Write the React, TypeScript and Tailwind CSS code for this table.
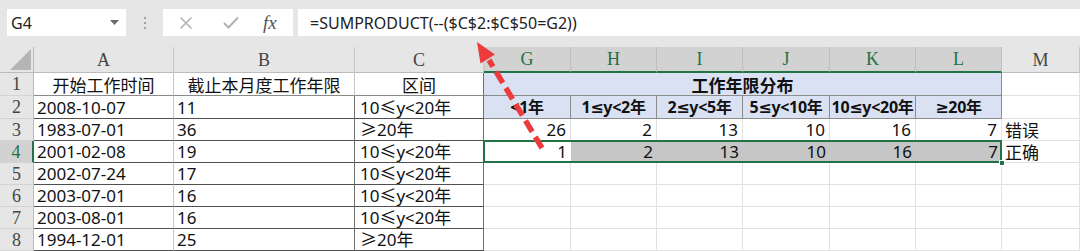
import React from "react";

const SANS = "font-['Noto_Sans','Noto_Sans_CJK_SC',sans-serif]";
const HSANS = "font-['Noto_Sans','DejaVu_Sans','Noto_Sans_CJK_SC',sans-serif]";
const CJK = "font-['Noto_Sans_CJK_SC','Noto_Sans',sans-serif]";
const SERIF = "font-['Liberation_Serif',serif]";

const colHeaders = [
  { l: "A", sel: false },
  { l: "B", sel: false },
  { l: "C", sel: false },
  { l: "G", sel: true },
  { l: "H", sel: true },
  { l: "I", sel: true },
  { l: "J", sel: true },
  { l: "K", sel: true },
  { l: "L", sel: true },
  { l: "M", sel: false },
];

const dataRows: [string, string, string][] = [
  ["2008-10-07", "11", "10≤y<20年"],
  ["1983-07-01", "36", "≥20年"],
  ["2001-02-08", "19", "10≤y<20年"],
  ["2002-07-24", "17", "10≤y<20年"],
  ["2003-07-01", "16", "10≤y<20年"],
  ["2003-08-01", "16", "10≤y<20年"],
  ["1994-12-01", "25", "≥20年"],
];

const ranges = ["<1年", "1≤y<2年", "2≤y<5年", "5≤y<10年", "10≤y<20年", "≥20年"];
const wrong = ["26", "2", "13", "10", "16", "7"];
const right = ["1", "2", "13", "10", "16", "7"];

function RowHead({ n, sel }: { n: number; sel?: boolean }) {
  return (
    <div
      className={`${SERIF} text-[18px] leading-none flex items-center justify-center border-b border-[#d4d4d4] ${
        sel
          ? "bg-[#d2d2d2] text-[#217346] border-r-2 border-r-[#217346]"
          : "bg-[#e6e6e6] text-[#444] border-r border-r-[#bcbcbc]"
      }`}
    >
      {n}
    </div>
  );
}

export default function App() {
  return (
    <div className="relative w-[1080px] h-[251px] overflow-hidden bg-white leading-none">
      {/* formula bar */}
      <div className="h-[47px] bg-[#e6e6e6] flex items-start pt-[9px]">
        <div className={`ml-[7px] w-[119px] h-[27px] bg-white flex items-center justify-between pl-[4px] pr-[7px] ${SANS} text-[16px] text-[#222]`}>
          <span>G4</span>
          <svg width="9" height="5" viewBox="0 0 9 5">
            <path d="M0 0 H9 L4.5 5 Z" fill="#6b6b6b" />
          </svg>
        </div>
        <div className="w-[37px] h-[27px] flex flex-col items-center justify-center gap-[3px]">
          <div className="w-[2px] h-[2px] bg-[#a0a0a0]" />
          <div className="w-[2px] h-[2px] bg-[#a0a0a0]" />
          <div className="w-[2px] h-[2px] bg-[#a0a0a0]" />
        </div>
        <div className="w-[130px] h-[27px] bg-white flex items-center">
          <svg width="14" height="14" viewBox="0 0 14 14" className="ml-[16px]">
            <path d="M1.5 1.5 L12.5 12.5 M12.5 1.5 L1.5 12.5" stroke="#b3b3b3" strokeWidth="1.6" />
          </svg>
          <svg width="16" height="13" viewBox="0 0 16 13" className="ml-[30px]">
            <path d="M1 7 L5.5 11.5 L15 1.5" stroke="#b3b3b3" strokeWidth="2" fill="none" />
          </svg>
          <span className={`ml-[24px] ${SERIF} italic text-[19px] text-[#555] leading-none`}>fx</span>
        </div>
        <div className={`ml-[5px] flex-1 h-[27px] bg-white flex items-center pl-[12px] ${SANS} text-[16px] text-[#222]`}>
          =SUMPRODUCT(--($C$2:$C$50=G2))
        </div>
      </div>

      {/* sheet grid */}
      <div className="grid grid-cols-[34px_140px_181px_129px_87px_86px_86px_87px_86px_86px_78px] grid-rows-[26px_23px_23px_22px_22px_22px_22px_22px_22px]">
        {/* header row */}
        <div className="bg-[#e6e6e6] border-r border-b border-[#bcbcbc] flex items-end justify-end pr-[2px] pb-[2px]">
          <svg width="21" height="21" viewBox="0 0 21 21">
            <path d="M21 0 V21 H0 Z" fill="#b5b5b5" />
          </svg>
        </div>
        {colHeaders.map((c) => (
          <div
            key={c.l}
            className={`${SERIF} text-[18px] flex items-center justify-center border-r ${
              c.sel
                ? "bg-[#d2d2d2] text-[#217346] border-r-[#bdbdbd] border-b-2 border-b-[#217346]"
                : "bg-[#e6e6e6] text-[#444] border-r-[#c8c8c8] border-b border-b-[#bcbcbc]"
            } ${c.l === "C" ? "border-r-[#9a9a9a]" : ""}`}
          >
            {c.l}
          </div>
        ))}

        {/* row 1 */}
        <RowHead n={1} />
        <div className={`${CJK} text-[17px] text-[#111] flex items-center justify-center border-r border-b border-r-[#c4c4c4] border-b-[#8a8a8a]`}>开始工作时间</div>
        <div className={`${CJK} text-[17px] text-[#111] flex items-center justify-center border-r border-b border-r-[#c4c4c4] border-b-[#8a8a8a]`}>截止本月度工作年限</div>
        <div className={`${CJK} text-[17px] text-[#111] flex items-center justify-center border-r border-b border-r-[#6e6e6e] border-b-[#8a8a8a]`}>区间</div>
        <div className={`col-span-6 bg-[#d9e1f2] ${CJK} font-bold text-[17px] text-[#111] flex items-center justify-center border-r border-b border-[#8c8c8c]`}>
          工作年限分布
        </div>
        <div className="border-r border-b border-[#e1e1e1]" />

        {/* rows 2-8 */}
        {dataRows.map((r, i) => {
          const rowNum = i + 2;
          const isSel = rowNum === 4;
          const darkBottom = "border-b-[#505050]";
          return (
            <React.Fragment key={rowNum}>
              <RowHead n={rowNum} sel={isSel} />
              <div className={`${SANS} text-[17px] text-[#111] flex items-center pl-[3px] border-r border-b border-r-[#c4c4c4] ${darkBottom}`}>
                {r[0]}
              </div>
              <div className={`${SANS} text-[17px] text-[#111] flex items-center pl-[3px] border-r border-b border-r-[#6e6e6e] ${darkBottom}`}>
                {r[1]}
              </div>
              <div className={`${SANS} text-[17px] text-[#111] flex items-center pl-[5px] border-r border-b border-r-[#6e6e6e] whitespace-nowrap ${darkBottom}`}>
                {r[2]}
              </div>
              {rowNum === 2 &&
                ranges.map((t) => (
                  <div
                    key={t}
                    className={`bg-[#d9e1f2] ${HSANS} font-bold text-[16px] text-[#111] flex items-center justify-center border-r border-b border-[#8c8c8c] whitespace-nowrap tracking-[-0.3px] overflow-hidden`}
                  >
                    {t}
                  </div>
                ))}
              {rowNum === 3 &&
                wrong.map((t, k) => (
                  <div key={k} className={`${SANS} text-[17px] text-[#111] flex items-center justify-end pr-[4px] border-r border-b border-[#e1e1e1]`}>
                    {t}
                  </div>
                ))}
              {rowNum === 4 && (
                <div className="relative col-span-6 flex h-[22px]">
                  {right.map((t, k) => (
                    <div
                      key={k}
                      className={`${SANS} text-[17px] text-[#111] h-full flex items-center justify-end pr-[4px] border-b ${
                        k === 0 ? "w-[87px] bg-white border-[#e1e1e1]" : k === 3 ? "w-[87px] bg-[#c6c6c6] border-[#c6c6c6]" : "w-[86px] bg-[#c6c6c6] border-[#c6c6c6]"
                      }`}
                    >
                      {t}
                    </div>
                  ))}
                  <div className="absolute -left-px -top-px right-0 bottom-0 border-2 border-[#217346]" />
                  <div className="absolute -right-[3px] -bottom-[3px] w-[6px] h-[6px] bg-[#217346] border border-white" />
                </div>
              )}
              {rowNum > 4 &&
                wrong.map((_, k) => <div key={k} className="border-r border-b border-[#e1e1e1]" />)}
              <div className={`${CJK} text-[17px] text-[#111] flex items-center pl-[3px] border-r border-b border-[#e1e1e1]`}>
                {rowNum === 3 ? "错误" : rowNum === 4 ? "正确" : ""}
              </div>
            </React.Fragment>
          );
        })}
      </div>

      {/* red dashed arrow overlay */}
      <svg className="absolute left-0 top-0 pointer-events-none" width="1080" height="251" viewBox="0 0 1080 251">
        <line x1="542" y1="148" x2="489" y2="60" stroke="#ec3a3d" strokeWidth="5.5" strokeDasharray="13 6" />
        <polygon points="477,42 495,54.5 480.5,63.5" fill="#ec3a3d" />
      </svg>
    </div>
  );
}
